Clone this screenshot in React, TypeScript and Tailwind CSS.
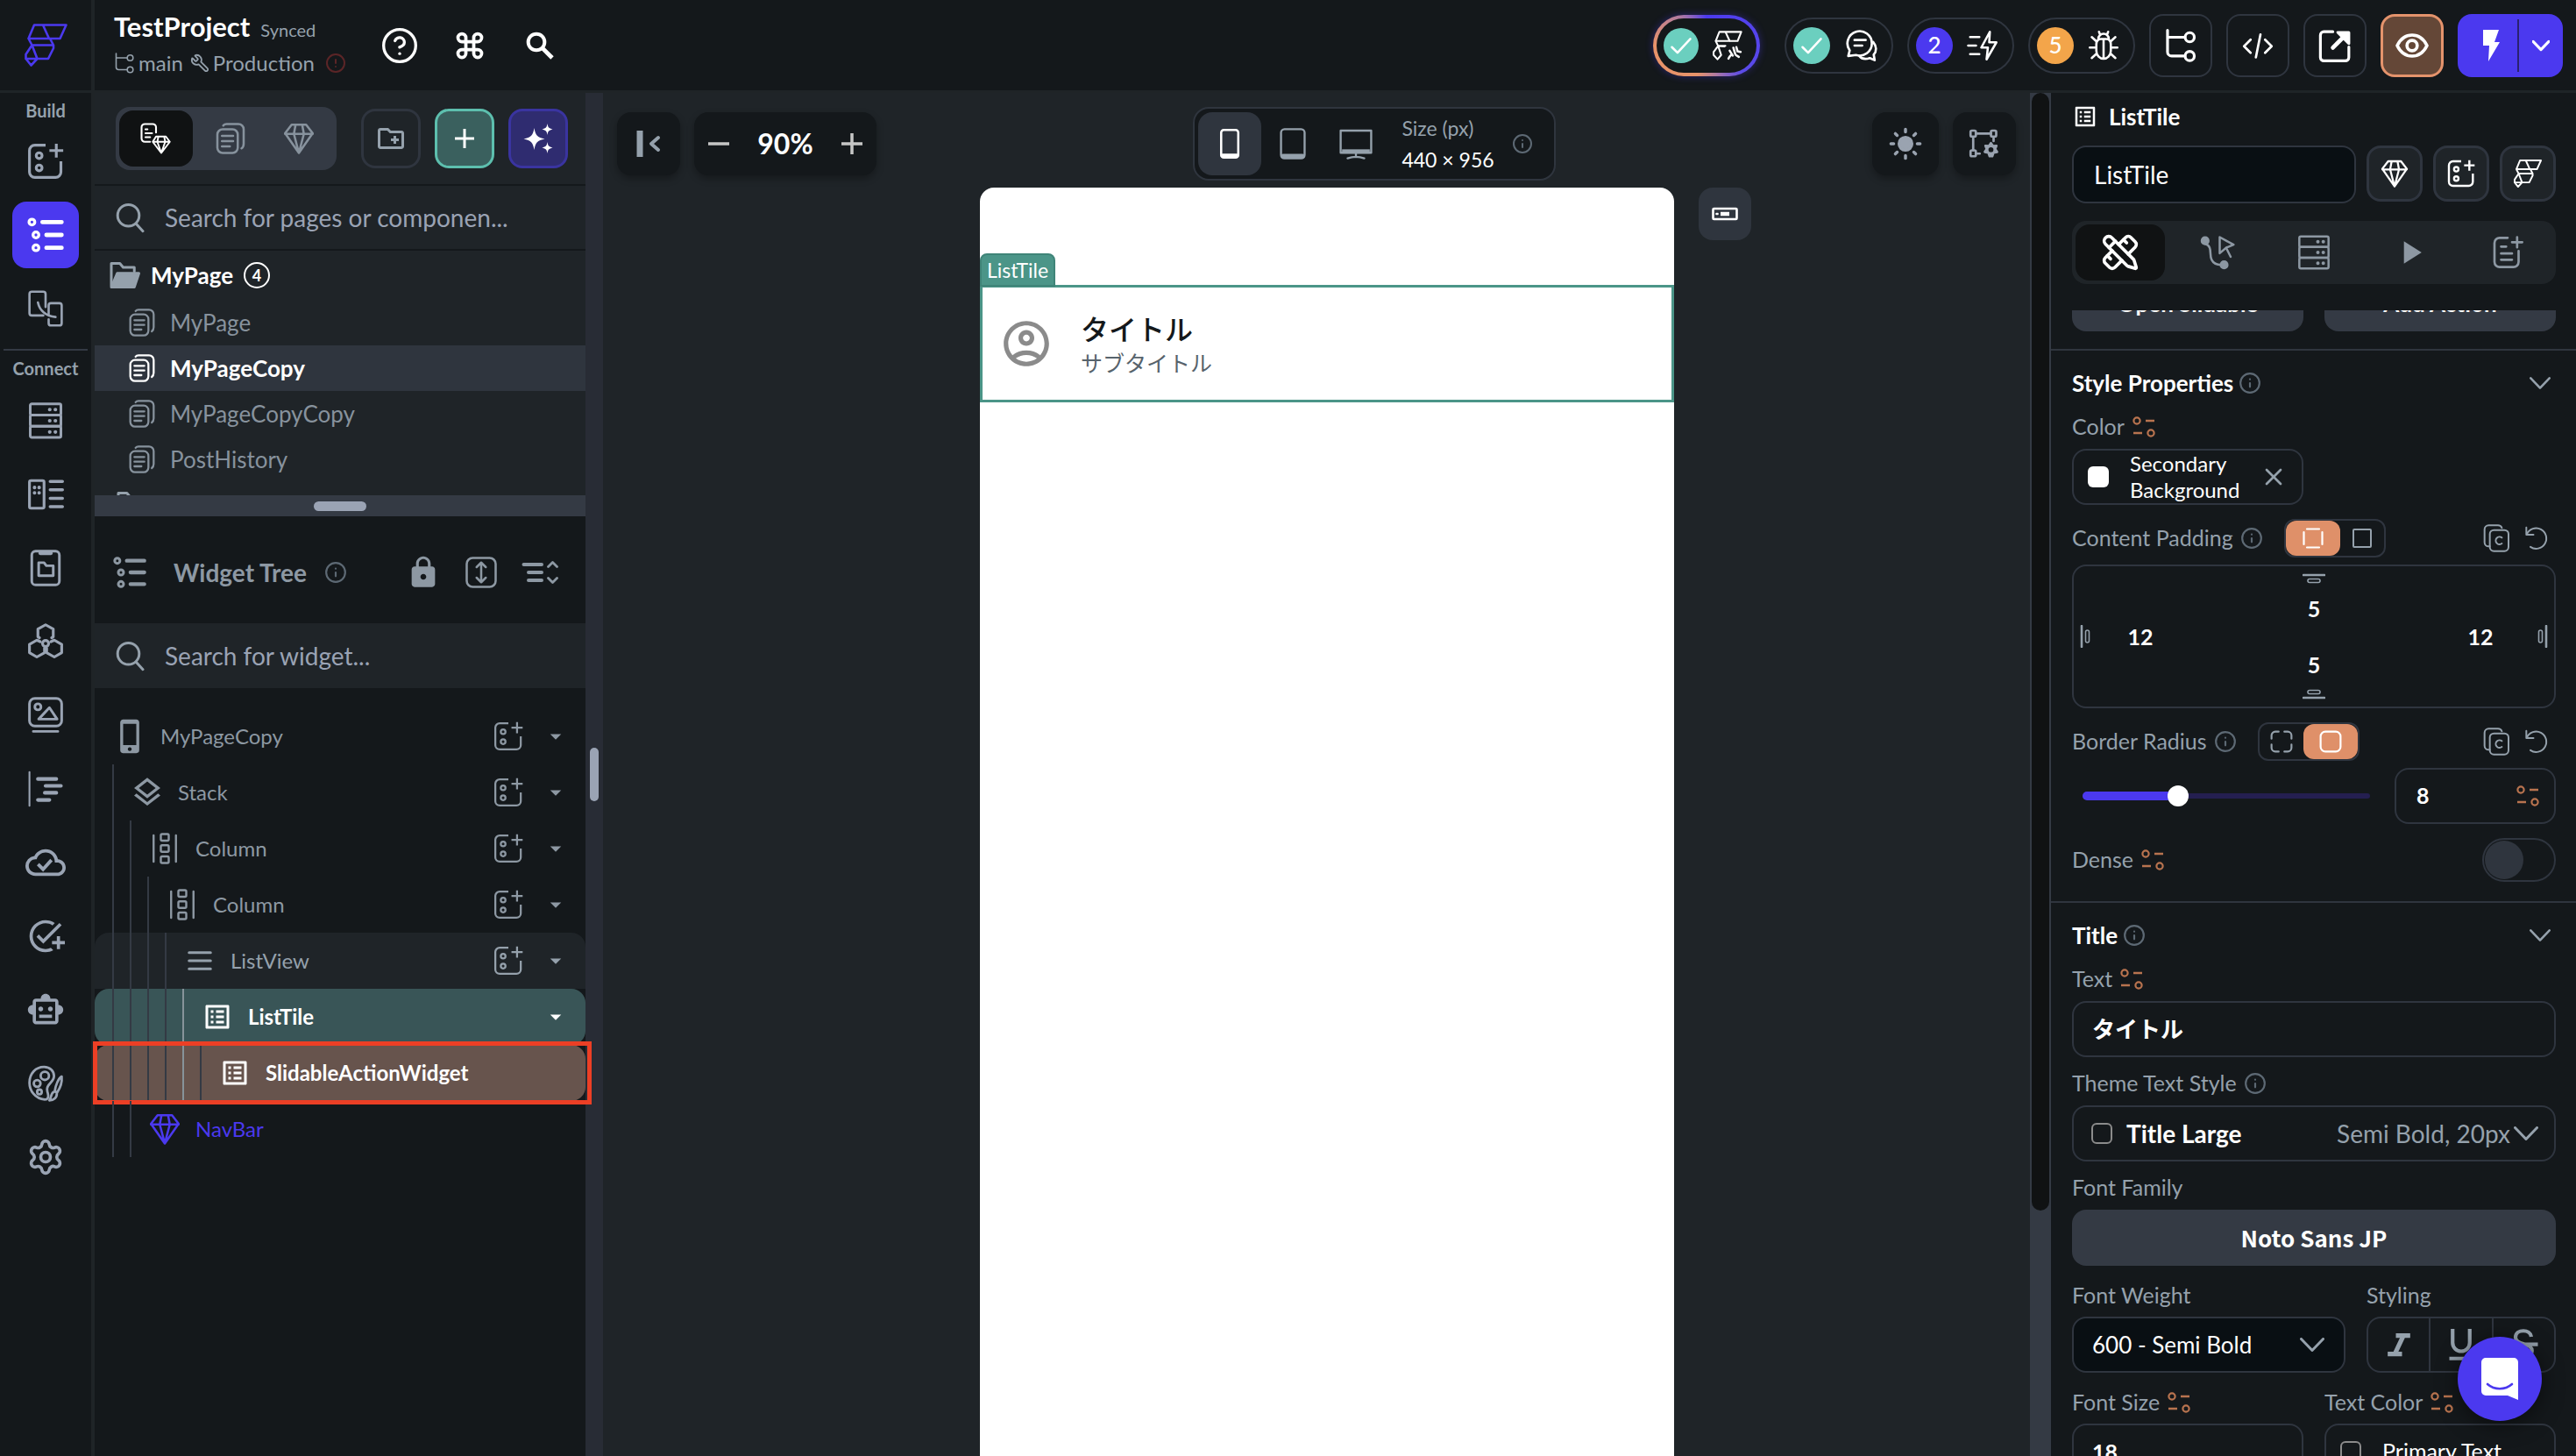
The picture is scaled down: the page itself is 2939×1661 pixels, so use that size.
import React, { useState } from "react";
import { CircleAlert, CircleHelp, Command, Info, PencilRuler, Search, Settings, Wrench, X } from "lucide-react";
import {
  MdArrowDropDown,
  MdCloudQueue,
  MdListAlt,
  MdLock,
  MdOutlineAccountCircle,
  MdOutlineAddTask,
  MdOutlineCreateNewFolder,
  MdOutlineLayers,
  MdOutlineSmartToy,
  MdPlayArrow,
} from "react-icons/md";

type IconProps = { className?: string; sw?: number };

function Svg({
  className = "size-8",
  sw = 2,
  box = "0 0 24 24",
  children,
}: IconProps & { box?: string; children: React.ReactNode }) {
  return (
    <svg
      viewBox={box}
      className={`shrink-0 ${className}`}
      fill="none"
      stroke="currentColor"
      strokeWidth={sw}
      strokeLinecap="round"
      strokeLinejoin="round"
      aria-hidden="true"
    >
      {children}
    </svg>
  );
}

const Chevron = ({ className = "w-7", sw = 3 }: IconProps) => (
  <Svg className={`h-4 ${className}`} sw={sw} box="0 0 28 16">
    <path d="M1.500 1.500 14 14.500 26.500 1.500" />
  </Svg>
);

const Logo = ({ className, sw = 2.6 }: IconProps) => (
  <Svg className={className} sw={sw} box="0 0 49 49">
    <path d="M11 1.5H47.5L40.5 17H4.5ZM21 1.5 28 17M4.500 17l4 7.500H33L29 17M33 24.500V28L27 40H1.500v-5l7-10.500M8.500 24.500 14.500 40l-7 7.500L1.500 40" />
  </Svg>
);

const LogoAi = ({ className }: IconProps) => (
  <Svg className={className} sw={3} box="0 0 49 49">
    <path d="M11 2H47L41 17H5ZM21 2l7 15M5 17l4 8h12M1.500 40v-5L9 25l5 15-6 7-6.500-7M9 25l10 1" />
    <path d="M26 46c1-3 3-5 5-7M33 41l-5-8M37 38l-3-10M41 34l-2-7M38 40l5 3M41 34l5 1" strokeWidth={3.600} />
  </Svg>
);

const WidgetAdd = ({ className, sw = 1.8 }: IconProps) => (
  <Svg className={className} sw={sw}>
    <path
      strokeLinecap="butt"
      d="M12 1.500H5A3.500 3.500 0 0 0 1.500 5v14A3.500 3.500 0 0 0 5 22.500h13.500A3.500 3.500 0 0 0 22 19v-7M19 .5v9M14.500 5H23.500"
    />
    <circle cx="7.800" cy="8.300" r="1.900" />
    <circle cx="7.800" cy="16.300" r="1.900" />
  </Svg>
);

const TreeList = ({ className }: IconProps) => (
  <Svg className={className} sw={1.8}>
    <circle cx="3.500" cy="4" r="1.800" />
    <circle cx="6" cy="12" r="1.800" />
    <circle cx="6" cy="20" r="1.800" />
    <path d="M10 4h12M12.500 12H22M12.500 20H22" strokeWidth={2.600} />
  </Svg>
);

const Storyboard = ({ className }: IconProps) => (
  <Svg className={className} sw={1.500}>
    <path d="M10.500 16.500H3A1.500 1.500 0 0 1 1.500 15V2.500A1.500 1.500 0 0 1 3 1h7.500A1.500 1.500 0 0 1 12 2.500V11" />
    <path d="M14 15.500V10A1.500 1.500 0 0 1 15.500 8.500H21A1.500 1.500 0 0 1 22.500 10v11.500A1.500 1.500 0 0 1 21 23h-5.500a1.500 1.500 0 0 1-1.500-1.500V19" />
    <path d="M7 8c1 5 5 9 11.500 9.500" />
  </Svg>
);

const Server = ({ className, sw = 1.700 }: IconProps) => (
  <Svg className={className} sw={sw}>
    <rect x="2" y="1" width="20" height="7.300" rx="1" />
    <rect x="2" y="8.300" width="20" height="7.300" rx="1" />
    <rect x="2" y="15.600" width="20" height="7.300" rx="1" />
    <path d="M14.700 4.700h.01M18.400 4.700h.01M14.700 12h.01M18.400 12h.01M14.700 19.300h.01M18.400 19.300h.01" strokeWidth={2.400} />
  </Svg>
);

const DataTypes = ({ className }: IconProps) => (
  <Svg className={className} sw={1.800}>
    <rect x="1.500" y="3" width="9.500" height="18" rx="1" />
    <path d="M4.800 7.500h.01M7.800 7.500h.01M4.800 11h.01M7.800 11h.01" strokeWidth={2.300} />
    <path d="M15 3.500h8M15 9h8M15 14.500h8M15 20h8" strokeWidth={2} />
  </Svg>
);

const FileState = ({ className }: IconProps) => (
  <Svg className={className} sw={1.700}>
    <rect x="3" y="1" width="18" height="22" rx="2.500" />
    <path d="M8.500 2.300h7" strokeWidth={2.400} />
    <path d="M7.500 8.500v8.500h9.500v-6.500h-4.500L11 8.500Z" />
  </Svg>
);

const Hexes = ({ className }: IconProps) => (
  <Svg className={className} sw={1.800}>
    <path d="M8 9.500 7 8.800V3.800L12 1l5 2.800v5l-1 .7M8.500 12 6.300 11 1.500 13.800v5.400L6.300 22l5-2.800v-3M15.500 12l2.200-1 4.800 2.800v5.400L17.700 22l-5-2.800v-3" />
    <circle cx="12" cy="13.200" r="2" />
  </Svg>
);

const Media = ({ className }: IconProps) => (
  <Svg className={className} sw={1.700}>
    <rect x="1.500" y="1" width="21" height="18" rx="3.500" />
    <circle cx="7" cy="6.500" r="2" />
    <path d="M7.500 14.500 14.500 7l5 7.500ZM4 22.500h16" />
  </Svg>
);

const CodeLines = ({ className }: IconProps) => (
  <Svg className={className} sw={2.400}>
    <path d="M1.500 1v22" strokeWidth={1.200} />
    <path d="M7 5.500h12M12 10h10M11.500 14.500H19M7 19.200h7.500" />
  </Svg>
);

const CloudDone = ({ className }: IconProps) => (
  <span className={`relative inline-block ${className}`}>
    <MdCloudQueue className="size-full" />
    <svg viewBox="0 0 24 24" className="absolute inset-0 size-full" fill="none" stroke="currentColor" strokeWidth={2}>
      <path d="m7.500 13 3 3 5-5.500" />
    </svg>
  </span>
);

const ThemePalette = ({ className }: IconProps) => (
  <Svg className={className} sw={1.600}>
    <path d="M11.500 22.500C5 22 1.500 16.500 1.500 11.500 1.500 5.500 5.500 1.200 11 1.200c4 0 6.500 2.800 6.500 6 0 4-4.500 5-4.500 8.500 0 2.800 1.500 3.800.5 5.800-.4.800-1 1-2 1Z" />
    <circle cx="11.500" cy="7" r="2.700" />
    <circle cx="6.500" cy="12" r="2.200" />
    <circle cx="8" cy="17.500" r="1.500" />
    <path d="M22.500 7.500c-2 1-4 5.500-4.500 9.500l1.500 1c2-3 3.300-7.500 3-10.500ZM17.500 17.500c-2 .5-1.500 3-3 5.500 3 0 5-2 4.800-4.500" />
  </Svg>
);

const Pages = ({ className, sw = 1.700 }: IconProps) => (
  <Svg className={className} sw={sw}>
    <rect x="2" y="5" width="15.500" height="18" rx="4" />
    <path d="M6.500 2.200C7 1.500 8 1 9 1h9a4 4 0 0 1 4 4v11c0 1.500-.6 2.800-1.600 3.500" />
    <path d="M5.500 10h8.500M5.500 14h8.500M5.500 18h6" />
  </Svg>
);

const Diamond = ({ className, sw = 1.700 }: IconProps) => (
  <Svg className={className} sw={sw}>
    <path d="M6.500 1.500h11L22.500 8 12 23 1.500 8ZM1.500 8.500h21M9.500 1.500 8.200 8.500 12 23l3.800-14.500-1.300-7" />
  </Svg>
);

const PageAndDiamond = ({ className }: IconProps) => (
  <Svg className={className} sw={1.400}>
    <path d="M7.500 14.500H3.500A2.500 2.500 0 0 1 1 12V3.500A2.500 2.500 0 0 1 3.500 1H9.500a2.500 2.500 0 0 1 2.500 2.500V7.500M4 5h1.500M4 8h5M4 11h3.500" />
    <path d="M12 10.500h7.500l3 4-6.500 8.500-6.500-8.500ZM9.500 14.500h13M13.800 10.500l-.8 4 3 8.500 3-8.500-.8-4" strokeWidth={1.300} />
  </Svg>
);

const Branch = ({ className, sw = 1.800 }: IconProps) => (
  <Svg className={className} sw={sw}>
    <path d="M2.500 1v15.500a3 3 0 0 0 3 3h9.500M2.500 6h12.500" />
    <circle cx="18.500" cy="6" r="3.300" />
    <circle cx="18.500" cy="19.500" r="3.300" />
  </Svg>
);

const OrangeVar = () => (
  <Svg className="h-[26px] w-7 text-[#b8734f]" sw={2.200} box="0 0 28 26">
    <circle cx="6" cy="6" r="3.600" />
    <path d="M16 6h10M2 20h10" strokeWidth={2.600} strokeLinecap="butt" />
    <circle cx="22" cy="20" r="3.600" />
  </Svg>
);

const FolderOpen = ({ className }: IconProps) => (
  <Svg className={className} sw={2}>
    <path d="M2 20V3h6.500l2.500 3h8.500v3" />
    <path d="M6.500 10.500H23L19.500 21H2Z" fill="currentColor" />
  </Svg>
);

const ColumnIcon = ({ className }: IconProps) => (
  <Svg className={className} sw={1.600}>
    <path d="M3.500 2v20M20.500 2v20" />
    <rect x="9" y="1" width="6" height="5" rx="1" />
    <rect x="9" y="9.500" width="6" height="5" rx="1" />
    <rect x="9" y="18" width="6" height="5" rx="1" />
  </Svg>
);

const PhoneFilled = ({ className }: IconProps) => (
  <Svg className={className} sw={2}>
    <path
      d="M8 .5h8A2 2 0 0 1 18.500 2.500v19a2 2 0 0 1-2 2H8a2 2 0 0 1-2.500-2v-19A2 2 0 0 1 8 .5ZM7.500 3.500v14.500h9V3.500ZM12 19.500a1.300 1.300 0 1 0 .01 0Z"
      fill="currentColor"
      fillRule="evenodd"
      stroke="none"
    />
  </Svg>
);

const Bars = ({ className }: IconProps) => (
  <Svg className={className} sw={2.600}>
    <path d="M1.500 4h21M1.500 12h21M1.500 20h21" />
  </Svg>
);

const ExpandAll = () => (
  <Svg className="size-9" sw={1.700}>
    <rect x="1" y="1" width="22" height="22" rx="4.500" />
    <path d="M12 4.500v15M8.500 8 12 4.500 15.500 8M8.500 16l3.500 3.500 3.500-3.500" />
  </Svg>
);

const CollapseTree = () => (
  <Svg className="h-7 w-[42px]" sw={4} box="0 0 42 28">
    <path d="M2.500 5H23M8 14h15M8 23h15" />
    <path d="m30.500 7.500 5-5 5 5M30.500 20.500l5 5 5-5" strokeWidth={2.800} />
  </Svg>
);

const Sparkle = ({ className }: IconProps) => (
  <svg viewBox="0 0 34 34" className={className} fill="currentColor" aria-hidden="true">
    <path d="M12.500 5c1.500 8.500 3.500 10.500 12 12.500-8.500 2-10.500 4-12 12.500C11 21.500 9 19.500.5 17.500 9 15.500 11 13.500 12.500 5ZM27.500 0c.8 4.500 1.500 5.200 6 6.500-4.500 1.300-5.200 2-6 6.500-.8-4.500-1.500-5.200-6-6.500 4.500-1.300 5.200-2 6-6.500ZM27.500 21c.8 4.500 1.500 5.200 6 6.500-4.500 1.300-5.200 2-6 6.500-.8-4.500-1.500-5.200-6-6.500 4.500-1.300 5.200-2 6-6.500Z" />
  </svg>
);

const Comments = () => (
  <Svg className="size-[38px]" sw={1.700}>
    <path d="M3 19.500 4 15.500A8.800 8.800 0 1 1 8.500 18.800ZM7.500 8h8M7.500 12h5.500" />
    <path d="M21 9.500c2.500 3 2.500 6.500.3 9l.7 4-3.500-1.500c-3 1-6 .5-7.500-1.500" />
  </Svg>
);

const FastBolt = () => (
  <Svg className="size-9" sw={1.700}>
    <path d="M17.500 1.500 11 13.500h5L15 22.500 22.500 9.500h-5.500ZM2.500 5.500h7M1 12h6M2.500 18.500h7" />
  </Svg>
);

const BugIcon = () => (
  <Svg className="size-9" sw={1.700}>
    <path d="M8 7a4 4 0 0 1 8 0M6.500 11C6.500 8.500 8 7 10 7h4c2 0 3.500 1.500 3.500 4v5a5.500 6 0 0 1-11 0ZM12 7v15M8.500 1.500 9.500 4M15.500 1.500 14.500 4M1.500 13.500h5M17.500 13.500h5M3 5.500 6.800 9M21 5.500 17.200 9M3 21.500l3.800-3.500M21 21.500 17.200 18" />
  </Svg>
);

const CodeIcon = () => (
  <Svg className="size-9" sw={1.800}>
    <path d="M6.500 7.500 1.500 12.500l5 5M17.500 7.500l5 5-5 5M14 3.500 10.500 21" />
  </Svg>
);

const OpenExternal = () => (
  <Svg className="size-[38px]" sw={2}>
    <path d="M10.500 2H4a2.500 2.500 0 0 0-2.500 2.500v16A2.500 2.500 0 0 0 4 23h15.500a2.500 2.500 0 0 0 2.500-2.500V13" />
    <path d="M10.500 13.500 18 6" strokeWidth={3} />
    <path d="M14 2.500h8v8Z" fill="currentColor" />
  </Svg>
);

const EyeIcon = () => (
  <Svg className="size-10" sw={2.200}>
    <path d="M1.800 12C4 7.500 7.500 4.800 12 4.800S20 7.500 22.200 12C20 16.500 16.500 19.200 12 19.200S4 16.500 1.800 12Z" />
    <circle cx="12" cy="12" r="3.500" />
  </Svg>
);

const ActionFlow = () => (
  <Svg className="size-10" sw={1.500}>
    <circle cx="3.500" cy="4" r="2.300" fill="currentColor" />
    <circle cx="16.500" cy="20.500" r="2.300" fill="currentColor" />
    <path d="M3.500 6C9 8 6 13 8 17c1.200 2.500 4 3.500 6.500 3.500" />
    <path d="m13.500 1.500 9.500 5.200-5 2-4.500 3.800ZM18 9l3 6" />
  </Svg>
);

const DocAdd = () => (
  <Svg className="size-10" sw={1.600}>
    <path d="M12 2H6.500A3.500 3.500 0 0 0 3 5.500v13A3.500 3.500 0 0 0 6.500 22H16a3.500 3.500 0 0 0 3.500-3.500V11M18.500 1.500v7M15 5h7M7.500 8h3.500M7.500 12.700h7.500M7.500 17h7.500" />
  </Svg>
);

const CopyC = () => (
  <Svg className="size-8" sw={1.500}>
    <path d="M6.500 19H5.500A3.500 3.500 0 0 1 2 15.500v-11A3.500 3.500 0 0 1 5.500 1h8c1.500 0 2.800.8 3.300 2.200" />
    <rect x="6.500" y="5" width="16" height="18" rx="3.500" />
    <path d="M16.800 11.500a3.200 3.200 0 1 0 0 5" />
  </Svg>
);

const UndoIcon = () => (
  <Svg className="size-7" sw={1.700}>
    <path d="M2 1.500v7h7M2.500 8A10 10 0 1 1 6 20.500" />
  </Svg>
);

const LayoutSettings = () => (
  <Svg className="size-9" sw={1.800}>
    <rect x="1.500" y="2" width="4" height="4.500" rx="1" />
    <rect x="17" y="2" width="4" height="4.500" rx="1" />
    <rect x="1.500" y="17" width="4" height="4.500" rx="1" />
    <path d="M6 4.200h11M3.500 7v10M19 7v3M6 19.500h2.500" />
    <path d="m17 11.500 1.500 2.200 2.700-.2-1 2.500 1.500 2.200-2.700.5L18 21.500h-2l-1-2.800-2.700-.5L13.800 16l-1-2.500 2.700.2Z" fill="currentColor" />
    <circle cx="17" cy="16.500" r="1" fill="#14181b" stroke="#14181b" />
  </Svg>
);

const SunIcon = () => (
  <Svg className="size-[38px]" sw={2.200}>
    <circle cx="12" cy="12" r="4.600" fill="currentColor" />
    <path d="M12 1.500v2M12 20.500v2M1.500 12h2M20.500 12h2M4.700 4.700l1.300 1.300M18 18l1.300 1.300M4.700 19.300 6 18M18 6l1.300-1.300" />
  </Svg>
);

function InfoDot({ className = "size-[26px]" }: IconProps) {
  return <Info className={`shrink-0 text-[#5d6974] ${className}`} strokeWidth={2} />;
}

/* ---------------------------------------------------------------- header */

function StatusPill({ badge, color, label, children }: { badge: React.ReactNode; color: string; label: string; children: React.ReactNode }) {
  return (
    <button aria-label={label} className="flex h-16 items-center gap-4 rounded-full border-2 border-[#2f353f] px-2 pr-4 text-white">
      <span className={`grid size-[42px] place-items-center rounded-full text-[26px] font-medium ${color}`}>{badge}</span>
      {children}
    </button>
  );
}

const Tick = () => (
  <Svg className="size-7" sw={2.200}>
    <path d="m3 13.500 5.500 5.500L21 5.500" />
  </Svg>
);

function SquareButton({ label, className = "border-2 border-[#2f353f]", children }: { label: string; className?: string; children: React.ReactNode }) {
  return (
    <button aria-label={label} className={`grid size-[72px] place-items-center rounded-2xl text-white ${className}`}>
      {children}
    </button>
  );
}

function Header() {
  return (
    <header className="flex h-[106px] shrink-0 border-b-[3px] border-[#1f2427] bg-[#14181b]">
      <a href="#home" aria-label="Home" className="grid w-[108px] place-items-center border-r-4 border-[#1f2427] text-[#4b39ef]">
        <Logo className="size-[49px]" />
      </a>
      <div className="flex flex-1 items-center justify-between pr-[15px] pl-[22px]">
        <div className="flex items-center">
          <div className="w-[286px]">
            <div className="mb-1 flex items-baseline gap-3">
              <span className="text-[31px] leading-8 font-bold text-white">TestProject</span>
              <span className="text-[20px] leading-8 text-[#95a1ac]">Synced</span>
            </div>
            <div className="flex items-center gap-1 text-[24px] leading-9 text-[#95a1ac]">
              <Branch className="size-6" sw={1.600} />
              <span>main</span>
              <Wrench className="ml-1 size-[22px] -scale-x-100" strokeWidth={2} />
              <span>Production</span>
              <CircleAlert className="ml-2 size-6 text-[#5b2527]" strokeWidth={2} />
            </div>
          </div>
          <div className="flex text-white">
            <button aria-label="Help" className="grid w-20 place-items-center">
              <CircleHelp className="size-[44px]" strokeWidth={1.800} />
            </button>
            <button aria-label="Shortcuts" className="grid w-20 place-items-center">
              <Command className="size-9" strokeWidth={2.500} />
            </button>
            <button aria-label="Search project" className="grid w-20 place-items-center">
              <Svg className="size-8" sw={3}>
                <circle cx="9" cy="9" r="7" />
                <path d="m14.500 14.500 8 8" strokeWidth={3.600} strokeLinecap="butt" />
              </Svg>
            </button>
          </div>
        </div>
        <div className="flex items-center gap-4">
          <div className="mr-3 rounded-full bg-[conic-gradient(from_0deg,#4b39ef,#5b4bea_35%,#b07aa0_45%,#e8936a_55%,#e8936a_75%,#b07aa0_88%,#4b39ef)] p-1 shadow-[0_0_8px_#4b39ef66]">
            <button aria-label="AI agent" className="flex h-[62px] items-center gap-4 rounded-full bg-[#14181b] pr-4 pl-2 text-white">
              <span className="grid size-10 place-items-center rounded-full bg-[#6bcfbf]">
                <Tick />
              </span>
              <LogoAi className="size-[34px]" />
            </button>
          </div>
          <StatusPill label="Comments" badge={<Tick />} color="bg-[#6bcfbf]">
            <Comments />
          </StatusPill>
          <StatusPill label="Optimizations" badge="2" color="bg-[#4b39ef]">
            <FastBolt />
          </StatusPill>
          <StatusPill label="Issues" badge="5" color="bg-[#f3a54a]">
            <BugIcon />
          </StatusPill>
          <SquareButton label="Branches">
            <Branch className="size-[38px]" sw={2} />
          </SquareButton>
          <SquareButton label="View code">
            <CodeIcon />
          </SquareButton>
          <SquareButton label="Open in new tab">
            <OpenExternal />
          </SquareButton>
          <SquareButton label="Preview" className="border-[3px] border-[#e4936c] bg-[#644737]">
            <EyeIcon />
          </SquareButton>
          <div className="flex h-[72px] items-center rounded-2xl bg-[#4b39ef] text-white">
            <button aria-label="Run" className="grid w-[68px] place-items-center pl-2">
              <svg viewBox="0 0 24 36" className="h-9 w-6" fill="currentColor" aria-hidden="true">
                <path d="M3 0h18l-5 14h6L9 36l1-18H3Z" />
              </svg>
            </button>
            <span className="h-[60px] w-0.5 bg-[#2a2270]" />
            <button aria-label="Run options" className="grid w-[50px] place-items-center">
              <Chevron className="w-5" sw={4.500} />
            </button>
          </div>
        </div>
      </div>
    </header>
  );
}

/* ------------------------------------------------------------------ rail */

const buildItems: [string, React.ReactNode, boolean][] = [
  ["Add widget", <WidgetAdd className="size-[42px]" />, false],
  ["Widget tree", <TreeList className="size-[44px]" />, true],
  ["Storyboard", <Storyboard className="size-[42px]" />, false],
];

const connectItems: [string, React.ReactNode][] = [
  ["Firestore", <Server className="size-[42px]" />],
  ["Data types", <DataTypes className="size-[42px]" />],
  ["App state", <FileState className="size-[42px]" />],
  ["API calls", <Hexes className="size-[42px]" />],
  ["Media assets", <Media className="size-[42px]" />],
  ["Custom code", <CodeLines className="size-[42px]" />],
  ["Cloud functions", <CloudDone className="size-[46px]" />],
  ["Tests", <MdOutlineAddTask className="size-11" />],
  ["Automations", <MdOutlineSmartToy className="size-11" />],
  ["Theme", <ThemePalette className="size-[42px]" />],
  ["Settings", <Settings className="size-11" strokeWidth={2} />],
];

function RailButton({ label, active = false, children }: { label: string; active?: boolean; children: React.ReactNode }) {
  return (
    <button aria-label={label} className={`grid size-[76px] place-items-center rounded-2xl ${active ? "bg-[#4b39ef] text-white" : "text-[#9aa4b4]"}`}>
      {children}
    </button>
  );
}

function Rail() {
  return (
    <nav className="flex w-[108px] shrink-0 flex-col items-center border-r-4 border-[#1f2427] bg-[#14181b] pt-1.5">
      <h2 className="text-[20px] leading-7 font-bold text-[#95a1ac]">Build</h2>
      <div className="mt-1.5 flex flex-col gap-2">
        {buildItems.map(([label, icon, active]) => (
          <RailButton key={label} label={label} active={active}>
            {icon}
          </RailButton>
        ))}
      </div>
      <hr className="mt-2 h-0.5 w-24 border-0 bg-[#343a44]" />
      <h2 className="mt-1.5 text-[20px] leading-7 font-bold text-[#95a1ac]">Connect</h2>
      <div className="mt-2 flex flex-col gap-2">
        {connectItems.map(([label, icon]) => (
          <RailButton key={label} label={label}>
            {icon}
          </RailButton>
        ))}
      </div>
    </nav>
  );
}

/* ------------------------------------------------------------ left panel */

const pages: [string, boolean][] = [
  ["MyPage", false],
  ["MyPageCopy", true],
  ["MyPageCopyCopy", false],
  ["PostHistory", false],
];

type TreeRow = {
  name: string;
  depth: number;
  icon: React.ReactNode;
  tone?: string;
  add?: boolean;
  arrow?: boolean;
  boxed?: boolean;
};

const tree: TreeRow[] = [
  { name: "MyPageCopy", depth: 0, icon: <PhoneFilled className="size-10" />, add: true, arrow: true },
  { name: "Stack", depth: 1, icon: <MdOutlineLayers className="size-10" />, add: true, arrow: true },
  { name: "Column", depth: 2, icon: <ColumnIcon className="size-9" />, add: true, arrow: true },
  { name: "Column", depth: 3, icon: <ColumnIcon className="size-9" />, add: true, arrow: true },
  { name: "ListView", depth: 4, icon: <Bars className="size-7" />, add: true, arrow: true, tone: "bg-[#1f2428] rounded-t-2xl text-[#95a1ac]" },
  { name: "ListTile", depth: 5, icon: <MdListAlt className="size-9" />, arrow: true, tone: "bg-[#395557] rounded-2xl text-white font-bold" },
  { name: "SlidableActionWidget", depth: 6, icon: <MdListAlt className="size-9" />, tone: "bg-[#67544d] rounded-2xl text-white font-bold", boxed: true },
  { name: "NavBar", depth: 2, icon: <Diamond className="size-9" />, tone: "text-[#4b39ef]" },
];

function SearchRow({ id, placeholder, className }: { id: string; placeholder: string; className: string }) {
  return (
    <div className={`flex shrink-0 items-center gap-[22px] bg-[#1f2428] pr-16 pl-[22px] ${className}`}>
      <label htmlFor={id} aria-label={placeholder}>
        <Svg className="size-9 text-[#95a1ac]" sw={2}>
          <circle cx="11" cy="10.500" r="8.200" />
          <path d="m17 17 5 5.500" />
        </Svg>
      </label>
      <input
        id={id}
        type="text"
        placeholder={placeholder}
        className="min-w-0 flex-1 truncate bg-transparent text-[28px] text-white outline-none placeholder:text-[#9aa3b4]"
      />
    </div>
  );
}

function LeftPanel() {
  return (
    <aside className="relative z-10 flex w-[560px] shrink-0 flex-col bg-[#14181b]">
      <section className="h-[459px] shrink-0 overflow-hidden bg-[#1f2428]">
        <div className="flex h-[104px] items-center justify-between pr-5 pl-6">
          <div className="flex h-[72px] w-[252px] items-center rounded-2xl bg-[#343a44] p-1 text-[#87929d]">
            <button aria-label="All" className="mr-1 grid h-16 w-[84px] place-items-center rounded-2xl bg-[#101213] text-white">
              <PageAndDiamond className="size-9" />
            </button>
            <button aria-label="Pages" className="grid flex-1 place-items-center">
              <Pages className="size-9" />
            </button>
            <button aria-label="Components" className="grid flex-1 place-items-center">
              <Diamond className="size-9" />
            </button>
          </div>
          <div className="flex gap-4">
            <button aria-label="New folder" className="grid size-[68px] place-items-center rounded-2xl border-[3px] border-[#2f353f] text-[#95a1ac]">
              <MdOutlineCreateNewFolder className="size-9" />
            </button>
            <button aria-label="Add" className="grid size-[68px] place-items-center rounded-2xl border-[3px] border-[#5dbfae] bg-[#3a605e] text-white">
              <Svg className="size-6" sw={3}>
                <path d="M12 1v22M1 12h22" strokeLinecap="butt" />
              </Svg>
            </button>
            <button aria-label="Generate" className="grid size-[68px] place-items-center rounded-2xl border-[3px] border-[#3a34a0] bg-[#2f2c70] text-white">
              <Sparkle className="size-[34px]" />
            </button>
          </div>
        </div>
        <SearchRow id="page-search" placeholder="Search for pages or componen..." className="h-[76px] border-y-2 border-[#14181b]" />
        <div className="flex h-14 items-center gap-3 pl-4">
          <FolderOpen className="size-9 text-[#95a1ac]" />
          <span className="text-[26px] font-bold text-white">MyPage</span>
          <span className="grid size-[30px] place-items-center rounded-full border-2 border-white text-[18px] font-bold text-white">4</span>
        </div>
        <ul>
          {pages.map(([name, selected]) => (
            <li key={name}>
              <button
                className={`flex h-[52px] w-full items-center gap-4 pl-[38px] text-[26px] ${
                  selected ? "bg-[#2f353e] font-bold text-white" : "text-[#87929d]"
                }`}
              >
                <Pages className="size-8" />
                {name}
              </button>
            </li>
          ))}
        </ul>
        <div className="mt-2 ml-6 text-[#95a1ac]">
          <FolderOpen className="size-9" />
        </div>
      </section>
      <div className="grid h-6 shrink-0 place-items-center bg-[#343a44]">
        <span className="h-[11px] w-[60px] rounded-md bg-[#9aa3b4]" />
      </div>
      <section className="flex flex-1 flex-col">
        <div className="flex h-[122px] items-center justify-between pt-1.5 pr-[31px] pl-5 text-[#8d98a3]">
          <div className="flex items-center">
            <TreeList className="size-10" />
            <h2 className="ml-[30px] text-[28px] font-bold">Widget Tree</h2>
            <InfoDot className="ml-5 size-[26px]" />
          </div>
          <div className="flex items-center gap-7">
            <button aria-label="Lock">
              <MdLock className="size-10" />
            </button>
            <button aria-label="Expand all">
              <ExpandAll />
            </button>
            <button aria-label="Collapse all">
              <CollapseTree />
            </button>
          </div>
        </div>
        <SearchRow id="widget-search" placeholder="Search for widget..." className="h-[74px]" />
        <ul className="mt-[23px]">
          {tree.map((row, i) => (
            <li key={i} className={`relative flex h-16 items-center pl-5 text-[24px] ${row.tone ?? "text-[#8d98a3]"}`}>
              {Array.from({ length: row.depth }, (_, d) => (
                <span key={d} className={`h-16 w-5 border-l-2 ${d === 4 ? "border-[#87939a]" : "border-[#343a44]"}`} />
              ))}
              <span className="grid w-10 place-items-center">{row.icon}</span>
              <span className="ml-[15px] flex-1">{row.name}</span>
              {row.add && (
                <button aria-label={`Add to ${row.name}`} className="mr-[22px]">
                  <WidgetAdd className="size-[34px]" sw={1.600} />
                </button>
              )}
              {row.arrow && (
                <button aria-label={`Toggle ${row.name}`} className="mr-[19px]">
                  <MdArrowDropDown className="size-[30px]" />
                </button>
              )}
              {row.boxed && <span className="pointer-events-none absolute -top-1 -right-[7px] -bottom-1 -left-[2px] border-[5px] border-[#ec3f25]" />}
            </li>
          ))}
        </ul>
      </section>
    </aside>
  );
}

/* ---------------------------------------------------------------- canvas */

const floating = "rounded-2xl bg-[#14181b] shadow-[0_4px_8px_#0000004d]";

function Canvas() {
  return (
    <main className="flex min-w-0 flex-1 flex-col bg-[#1f2428]">
      <div className="flex h-[108px] shrink-0 items-center justify-between px-4 pt-2">
        <div className="flex gap-4">
          <button aria-label="Hide panel" className={`grid size-[72px] place-items-center text-[#95a1ac] ${floating}`}>
            <Svg className="size-8" sw={3} box="0 0 32 32">
              <path d="M6 1v30" strokeWidth={7} strokeLinecap="butt" />
              <path d="m27 9-8 7 8 7" strokeWidth={4} />
            </Svg>
          </button>
          <div className={`flex h-[72px] w-[208px] items-center justify-between px-4 ${floating}`}>
            <button aria-label="Zoom out" className="text-[#c6c6c6]">
              <Svg className="size-6" sw={3.500}>
                <path d="M0 12h24" strokeLinecap="butt" />
              </Svg>
            </button>
            <span className="text-[32px] font-bold text-white">90%</span>
            <button aria-label="Zoom in" className="text-[#c6c6c6]">
              <Svg className="size-6" sw={3.500}>
                <path d="M0 12h24M12 0v24" strokeLinecap="butt" />
              </Svg>
            </button>
          </div>
        </div>
        <div className="flex h-[84px] items-center rounded-[18px] border-2 border-[#2f353e] bg-[#14181b] pr-6 pl-1 text-[#95a1ac]">
          <button aria-label="Phone" className="grid size-[72px] place-items-center rounded-2xl bg-[#2f353e] text-white">
            <Svg className="size-9" sw={1.700}>
              <rect x="5.500" y="1.500" width="13" height="21" rx="2" />
              <path d="M6.500 21h11" strokeWidth={3} />
            </Svg>
          </button>
          <button aria-label="Tablet" className="grid size-[72px] place-items-center">
            <Svg className="size-[38px]" sw={1.500}>
              <rect x="3.500" y="1.500" width="17" height="21" rx="2.500" />
              <path d="M5 21h14" strokeWidth={3.500} />
            </Svg>
          </button>
          <button aria-label="Desktop" className="grid size-[72px] place-items-center">
            <Svg className="size-[38px]" sw={1.500}>
              <rect x="1" y="2.500" width="22" height="16" />
              <path d="M2 17.500h20" strokeWidth={3} strokeLinecap="butt" />
              <path d="M12 19v2.500M6 22.500c4-1.500 8-1.500 12 0" />
            </Svg>
          </button>
          <div className="ml-4 text-[23px] leading-9">
            <div>Size (px)</div>
            <div className="text-white">440 × 956</div>
          </div>
          <InfoDot className="ml-5 size-6" />
        </div>
        <div className="flex justify-end gap-4 text-[#9aa3b0]">
          <button aria-label="Light mode" className={`grid h-[72px] w-[76px] place-items-center ${floating}`}>
            <SunIcon />
          </button>
          <button aria-label="Canvas settings" className={`grid size-[72px] place-items-center ${floating}`}>
            <LayoutSettings />
          </button>
        </div>
      </div>
      <div className="flex min-h-0 flex-1 justify-center pl-6">
        <div className="relative w-[792px] rounded-t-2xl bg-white pt-[111px]">
          <span className="absolute top-[75px] left-0 rounded-t-lg border-2 border-[#3f8478] bg-[#4b9588] px-1.5 text-[23px] leading-[34px] text-white">ListTile</span>
          <div className="flex h-[134px] items-center border-[3px] border-[#4b9588] pl-[19px]">
            <MdOutlineAccountCircle className="size-[62px] text-[#8b8b8b]" />
            <div className="ml-[31px] font-['Noto_Sans_CJK_JP',sans-serif]">
              <div className="text-[32px] leading-[42px] font-medium text-[#14181b]">タイトル</div>
              <div className="text-[25px] leading-9 text-[#57636c]">サブタイトル</div>
            </div>
          </div>
          <button aria-label="Show keyboard" className="absolute top-0 left-full ml-7 grid size-[60px] place-items-center rounded-2xl bg-[#2f353e] text-white">
            <Svg className="h-4 w-[30px]" sw={2.600} box="0 0 30 16">
              <rect x="1.500" y="2" width="27" height="12" rx="1" />
              <path d="M5.500 8h1" />
              <path d="M10 8h10" strokeWidth={4.500} strokeLinecap="butt" />
            </Svg>
          </button>
        </div>
      </div>
    </main>
  );
}

/* ----------------------------------------------------------- right panel */

const field = "h-16 rounded-2xl border-2 border-[#2f353f]";

function SectionHead({ title }: { title: string }) {
  return (
    <div className="flex h-10 items-center justify-between pr-1.5">
      <h3 className="flex items-center gap-1.5 text-[26px] font-bold text-white">
        {title}
        <InfoDot />
      </h3>
      <button aria-label={`Collapse ${title}`} className="text-[#95a1ac]">
        <Chevron className="w-6" />
      </button>
    </div>
  );
}

function FieldLabel({ htmlFor, text, info = false, variable = false }: { htmlFor?: string; text: string; info?: boolean; variable?: boolean }) {
  return (
    <div className="flex h-8 items-center gap-2 text-[25px] text-[#95a1ac]">
      <label htmlFor={htmlFor}>{text}</label>
      {info && <InfoDot />}
      {variable && <OrangeVar />}
    </div>
  );
}

function TwoWay({ first, second, active, names }: { first: React.ReactNode; second: React.ReactNode; active: 0 | 1; names: [string, string] }) {
  const on = "w-[62px] rounded-xl bg-[#df9069] text-white";
  const off = "w-[50px] text-[#95a1ac]";
  return (
    <div className="flex h-11 rounded-xl border-2 border-[#2f353f]">
      <button aria-label={names[0]} className={`grid place-items-center ${active === 0 ? on : off}`}>
        {first}
      </button>
      <button aria-label={names[1]} className={`grid place-items-center ${active === 1 ? on : off}`}>
        {second}
      </button>
    </div>
  );
}

function LabelBar({ text, toggle }: { text: string; toggle: React.ReactNode }) {
  return (
    <div className="mt-4 flex h-11 items-center justify-between">
      <div className="flex items-center gap-6">
        <FieldLabel text={text} info />
        {toggle}
      </div>
      <div className="flex items-center gap-4 pr-2 text-[#95a1ac]">
        <button aria-label={`Copy ${text}`}>
          <CopyC />
        </button>
        <button aria-label={`Reset ${text}`}>
          <UndoIcon />
        </button>
      </div>
    </div>
  );
}

const EdgeBars = ({ className }: IconProps) => (
  <Svg className={className} sw={2} box="0 0 26 12">
    <path d="M1 2h24" strokeWidth={2.600} />
    <rect x="6" y="6.500" width="14" height="4" rx="2" strokeWidth={1.600} />
  </Svg>
);

function NumberCell({ label, initial }: { label: string; initial: string }) {
  return <input aria-label={label} defaultValue={initial} className="w-16 bg-transparent text-center text-[25px] leading-8 font-bold text-white outline-none" />;
}

const tabs: [string, React.ReactNode][] = [
  ["Properties", <PencilRuler className="size-[44px] -scale-x-100" strokeWidth={2} />],
  ["Actions", <ActionFlow />],
  ["Backend query", <Server className="size-10" sw={1.500} />],
  ["Animations", <MdPlayArrow className="size-11" />],
  ["Documentation", <DocAdd />],
];

const widgetActions: [string, React.ReactNode][] = [
  ["Convert to component", <Diamond className="size-8" />],
  ["Wrap widget", <WidgetAdd className="size-8" />],
  ["Generate", <Logo className="size-8" sw={3} />],
];

function RightPanel() {
  const [radius, setRadius] = useState(8);
  return (
    <aside className="flex w-[599px] shrink-0 flex-col bg-[#14181b]">
      <div className="shrink-0 pr-[23px] pl-6">
        <div className="mb-1.5 flex h-[54px] items-center gap-3 text-white">
          <MdListAlt className="size-[30px]" />
          <h2 className="text-[26px] font-bold">ListTile</h2>
        </div>
        <div className="flex gap-3">
          <input
            aria-label="Widget name"
            defaultValue="ListTile"
            className="h-[66px] min-w-0 flex-1 rounded-2xl border-2 border-[#2f353f] bg-[#090f13] px-[23px] text-[28px] text-white outline-none"
          />
          {widgetActions.map(([label, icon]) => (
            <button key={label} aria-label={label} className="grid size-16 place-items-center rounded-2xl border-[3px] border-[#2f353f] bg-[#1f2428] text-white">
              {icon}
            </button>
          ))}
        </div>
        <div className="mt-5 grid h-[72px] grid-cols-5 rounded-2xl bg-[#1f2428]">
          {tabs.map(([label, icon], i) => (
            <button key={label} aria-label={label} className={`m-1 grid place-items-center rounded-2xl ${i === 0 ? "bg-[#101213] text-white" : "text-[#8d98a3]"}`}>
              {icon}
            </button>
          ))}
        </div>
      </div>

      <div className="mt-[30px] min-h-0 flex-1 overflow-hidden">
        <div className="-mt-10 grid grid-cols-2 gap-6 pr-[23px] pb-5 pl-6 text-[26px] font-bold text-white">
          <button className="h-16 rounded-2xl bg-[#343a44]">Open Slidable</button>
          <button className="h-16 rounded-2xl bg-[#343a44]">Add Action</button>
        </div>

        <section className="border-t-2 border-[#2f353e] pt-[17px] pr-[23px] pb-[22px] pl-6">
          <SectionHead title="Style Properties" />
          <div className="mt-3.5">
            <FieldLabel text="Color" variable />
          </div>
          <div className={`mt-[9px] flex w-[264px] items-center pl-4 text-white ${field}`}>
            <button aria-label="Pick color" className="size-6 shrink-0 rounded-md bg-white" />
            <span className="ml-6 w-[136px] text-[24px] leading-[30px]">Secondary Background</span>
            <button aria-label="Clear color" className="ml-3 text-[#95a1ac]">
              <X className="size-8" strokeWidth={2} />
            </button>
          </div>

          <LabelBar
            text="Content Padding"
            toggle={
              <TwoWay
                active={0}
                names={["Per side", "All sides"]}
                first={
                  <Svg className="size-6" sw={2.200}>
                    <path d="M5 1.500h14M5 22.500h14M1.500 5v14M22.500 5v14" />
                  </Svg>
                }
                second={
                  <Svg className="size-6" sw={2}>
                    <rect x="2" y="2" width="20" height="20" rx="1" />
                  </Svg>
                }
              />
            }
          />
          <div className="mt-2 grid h-[164px] grid-cols-[44px_1fr_1fr_1fr_44px] items-center rounded-2xl border-2 border-[#2f353f] text-[#95a1ac]">
            <EdgeBars className="h-3 w-[26px] -rotate-90 justify-self-start" />
            <NumberCell label="Left padding" initial="12" />
            <div className="flex h-full flex-col items-center justify-between py-2">
              <EdgeBars className="h-3 w-[26px]" />
              <div className="flex flex-col gap-8">
                <NumberCell label="Top padding" initial="5" />
                <NumberCell label="Bottom padding" initial="5" />
              </div>
              <EdgeBars className="h-3 w-[26px] rotate-180" />
            </div>
            <div className="flex justify-end pr-2">
              <NumberCell label="Right padding" initial="12" />
            </div>
            <EdgeBars className="h-3 w-[26px] rotate-90 justify-self-end" />
          </div>

          <LabelBar
            text="Border Radius"
            toggle={
              <TwoWay
                active={1}
                names={["Per corner", "All corners"]}
                first={
                  <Svg className="size-[26px]" sw={2}>
                    <path d="M1.500 9V5.500a4 4 0 0 1 4-4H9M15 1.500h3.500a4 4 0 0 1 4 4V9M22.500 15v3.500a4 4 0 0 1-4 4H15M9 22.500H5.500a4 4 0 0 1-4-4V15" />
                  </Svg>
                }
                second={
                  <Svg className="size-[26px]" sw={2}>
                    <rect x="1.500" y="1.500" width="21" height="21" rx="5" />
                  </Svg>
                }
              />
            }
          />
          <div className="mt-2 flex items-center gap-4">
            <div className="grid flex-1 items-center">
              <span className="col-start-1 row-start-1 mx-3 h-1.5 rounded-full bg-[#241f50]" />
              <span className="col-start-1 row-start-1 mx-3">
                <span className="block h-2.5 rounded-full bg-[#4b39ef]" style={{ width: `${(radius / 24) * 100}%` }} />
              </span>
              <input
                type="range"
                aria-label="Border radius"
                min={0}
                max={24}
                value={radius}
                onChange={(e) => setRadius(Number(e.target.value))}
                className="z-10 col-start-1 row-start-1 h-6 w-full appearance-none bg-transparent [&::-webkit-slider-thumb]:size-6 [&::-webkit-slider-thumb]:appearance-none [&::-webkit-slider-thumb]:rounded-full [&::-webkit-slider-thumb]:bg-white"
              />
            </div>
            <div className={`flex w-[184px] items-center justify-between pr-4 pl-[23px] ${field}`}>
              <input
                aria-label="Border radius value"
                value={radius}
                onChange={(e) => setRadius(Number(e.target.value) || 0)}
                className="w-16 bg-transparent text-[25px] font-bold text-white outline-none"
              />
              <OrangeVar />
            </div>
          </div>

          <div className="mt-4 flex h-[50px] items-center justify-between">
            <FieldLabel htmlFor="dense" text="Dense" variable />
            <label className="flex h-[50px] w-[84px] items-center rounded-full border-2 border-[#2f353f] px-px">
              <input id="dense" type="checkbox" role="switch" className="size-11 appearance-none rounded-full bg-[#2f353e] checked:translate-x-8" />
            </label>
          </div>
        </section>

        <section className="border-t-2 border-[#2f353e] pt-[17px] pr-[23px] pl-6">
          <SectionHead title="Title" />
          <div className="mt-3.5">
            <FieldLabel htmlFor="title-text" text="Text" variable />
          </div>
          <input
            id="title-text"
            defaultValue="タイトル"
            className={`mt-[9px] w-full bg-transparent px-[21px] pb-1 font-['Noto_Sans_CJK_JP',sans-serif] text-[26px] font-bold text-white outline-none ${field}`}
          />
          <div className="mt-3.5">
            <FieldLabel text="Theme Text Style" info />
          </div>
          <button className={`mt-[9px] flex w-full items-center pr-[18px] pl-5 text-[#95a1ac] ${field}`}>
            <span className="size-6 rounded-md border-2 border-[#8b8b8b]" />
            <span className="ml-4 flex-1 text-left text-[28px] font-bold text-white">Title Large</span>
            <span className="mr-1 text-[28px]">Semi Bold, 20px</span>
            <Chevron className="w-7" />
          </button>
          <div className="mt-3.5">
            <FieldLabel text="Font Family" />
          </div>
          <button className="mt-[9px] h-16 w-full rounded-2xl bg-[#343a44] pb-0.5 font-['Noto_Sans_CJK_JP',sans-serif] text-[26px] font-bold text-white">Noto Sans JP</button>

          <div className="mt-[18px] flex gap-6">
            <div className="flex-1">
              <FieldLabel htmlFor="weight" text="Font Weight" />
              <div className="relative mt-2">
                <select id="weight" className={`w-full appearance-none bg-[#090f13] px-[21px] text-[26px] text-white outline-none ${field}`}>
                  <option>600 - Semi Bold</option>
                </select>
                <span className="pointer-events-none absolute inset-y-0 right-6 flex items-center text-[#95a1ac]">
                  <Chevron className="w-7" />
                </span>
              </div>
            </div>
            <div className="w-[216px]">
              <FieldLabel text="Styling" />
              <div className={`mt-2 flex divide-x-2 divide-[#2f353f] text-[#95a1ac] ${field}`}>
                <button aria-label="Italic" className="grid flex-1 place-items-center">
                  <Svg className="size-7" sw={4.500}>
                    <path d="M9 3h14M1 21h14M16.500 3 8 21" strokeLinecap="butt" />
                  </Svg>
                </button>
                <button aria-label="Underline" className="grid flex-1 place-items-center">
                  <Svg className="size-9" sw={2.800}>
                    <path d="M5.500 0v10.500a6.500 6.500 0 0 0 13 0V0M3 22.500h18" strokeLinecap="butt" />
                  </Svg>
                </button>
                <button aria-label="Strikethrough" className="grid flex-1 place-items-center">
                  <Svg className="size-9" sw={2.800}>
                    <path d="M18 6c-.5-3-3-4.500-6-4.500S6 3 6 6.500c0 2.500 2 3.800 6 4.800s6.500 2.500 6.500 5.200c0 3-3 5-6.500 5s-6.500-1.800-6.500-5M1 11.800h22" strokeLinecap="butt" />
                  </Svg>
                </button>
              </div>
            </div>
          </div>

          <div className="mt-[18px] grid grid-cols-2 gap-6">
            <div>
              <FieldLabel htmlFor="font-size" text="Font Size" variable />
              <input id="font-size" defaultValue="18" className={`mt-2 w-full bg-transparent px-[21px] text-[25px] font-bold text-white outline-none ${field}`} />
            </div>
            <div>
              <FieldLabel text="Text Color" variable />
              <button className={`mt-2 flex w-full items-center gap-6 pl-4 text-[25px] text-white ${field}`}>
                <span className="size-6 rounded-md border-2 border-[#8b8b8b]" />
                Primary Text
              </button>
            </div>
          </div>
        </section>
      </div>
    </aside>
  );
}

export default function App() {
  return (
    <div className="flex h-screen w-full flex-col overflow-hidden bg-[#14181b] font-['Lato','Noto_Sans_CJK_JP',sans-serif]">
      <Header />
      <div className="flex min-h-0 flex-1">
        <Rail />
        <LeftPanel />
        <div className="grid w-5 shrink-0 place-items-center bg-[#282c35]">
          <span className="h-[61px] w-2.5 rounded-full bg-[#9aa3b4]" />
        </div>
        <Canvas />
        <div className="w-6 shrink-0 bg-[#343a44] px-0.5">
          <div className="h-[82%] rounded-full bg-[#101213]" />
        </div>
        <RightPanel />
      </div>
      <button aria-label="Open chat" className="fixed right-[39px] bottom-10 z-20 grid size-24 place-items-center rounded-full bg-[#4b39ef] shadow-[0_4px_24px_#00000080]">
        <svg viewBox="0 0 42 48" className="h-12 w-[42px]" aria-hidden="true">
          <path d="M5 0h32a5 5 0 0 1 5 5v43l-12-5H5a5 5 0 0 1-5-5V5a5 5 0 0 1 5-5Z" fill="#fff" />
          <path d="M7 30c8 7 20 7 28 0" fill="none" stroke="#4b39ef" strokeWidth={2.600} strokeLinecap="round" />
        </svg>
      </button>
    </div>
  );
}
